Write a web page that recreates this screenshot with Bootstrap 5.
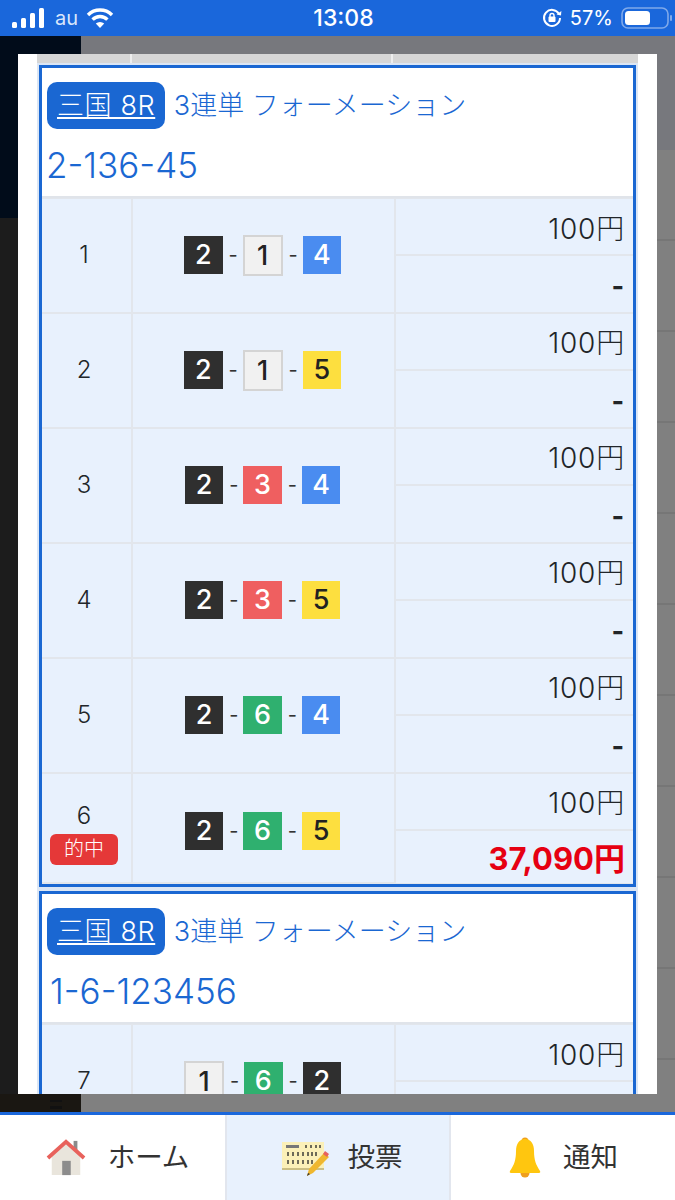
<!DOCTYPE html>
<html lang="ja">
<head>
    <meta charset="UTF-8">
    <meta name="viewport" content="width=device-width, initial-scale=1.0">
    <title>投票</title>
    <link href="https://cdn.jsdelivr.net/npm/bootstrap@5.3.0/dist/css/bootstrap.min.css" rel="stylesheet">
    <style>
        html, body { height: 1200px; overflow: hidden; }
        body {
            font-family: "Inter", "Noto Sans CJK JP", "Noto Sans", sans-serif;
            color: #222;
            background: #fff;
        }
        .phone { height: 1200px; }

        /* ステータスバー */
        .status-bar {
            height: 36px;
            background: #1a67db;
            color: #fff;
            font-family: "Inter", "Liberation Sans", sans-serif;
            font-size: 20px;
            line-height: 36px;
            padding: 0 12px;
        }
        .status-left, .status-right { width: 200px; }
        .status-right { margin-right: -12px; }
        .status-time { font-size: 23px; font-weight: 500; }
        .carrier { color: #d9e6fb; margin: 0 8px 0 11px; font-size: 20px; }

        /* 背景 */
        .backdrop { height: 1076px; position: relative; }
        .back-left { width: 81px; background: #1c1c1c; }
        .back-left-top { height: 182px; background: #010c1a; }
        .back-left-foot { height: 18px; margin-top: auto; background: #1a1712; padding-left: 50px; }
        .foot-glyph { width: 12px; height: 9px; margin-top: 6px; border-top: 2px solid #111; border-bottom: 3px solid #111; }
        .back-right { background: #808080; }
        .back-right-top { height: 114px; background: #77787d; }
        .back-line { height: 91px; border-bottom: 2px solid #767676; }

        /* モーダル */
        .sheet {
            position: absolute;
            top: 18px; left: 18px; right: 18px; bottom: 18px;
            background: #fff;
            overflow: hidden;
            padding: 0 19px;
        }
        .prev-strip { height: 9px; background: #d6d6d6; margin-bottom: 2px; padding-left: 93px; }
        .prev-strip span { display: block; width: 263px; height: 9px; border-left: 2px solid #eee; border-right: 2px solid #eee; }
        .bet-box {
            border: 3px solid #1a67d2;
            outline: 2px solid #dbe6f5;
            margin: 0 2px 4px 2px;
            background: #fff;
        }
        .bet-head { height: 130px; padding: 14px 0 0 5px; color: #1a67d2; border-bottom: 2px solid #e0e4ea; }
        .bet-title { font-size: 27px; font-weight: 300; height: 47px; line-height: 47px; white-space: nowrap; }
        .place-pill {
            display: inline-block;
            height: 47px;
            padding: 0 10px;
            margin-right: 1px;
            background: #1a67d2;
            color: #fff;
            border-radius: 10px;
            letter-spacing: .6px;
        }
        .bet-code { font-size: 35px; font-weight: 300; line-height: 40px; margin: 16px 0 0 -1px; }

        .bet-table { table-layout: fixed; margin: 0; --bs-table-bg: #e8f1fd; --bs-table-border-color: #e2e6ec; }
        .bet-table td { padding: 0; vertical-align: middle; border-width: 0 2px 2px 0; }
        .bet-table tr td:last-child { border-right-width: 0; }
        .bet-table tr:last-child td { border-bottom-width: 0; }
        .col-no { width: 90px; }
        .col-combo { width: 263px; }
        .cell-no { text-align: center; font-size: 24px; line-height: 24px; font-weight: 300; padding-right: 5px !important; }
        .hit-cell { padding-top: 13px !important; }
        .combo-hit { padding-top: 7px !important; }
        .cell-yen {
            height: 57.5px;
            text-align: right;
            padding: 4px 8px 0 0 !important;
            font-size: 28px;
            font-weight: 300;
            letter-spacing: .8px;
        }
        .bet-table tbody tr:first-child .cell-yen { height: 56.5px; }
        .cell-bar { font-weight: 700; font-size: 27px; line-height: 1; }
        .bet-table tr.short-row .cell-yen { height: 53px; padding-top: 6px !important; }
        .win-amount { color: #e60012; font-weight: 700; font-size: 31px; line-height: 1; letter-spacing: 0; }
        .hit-tag {
            display: block;
            width: 68px;
            height: 31px;
            margin: 6px auto 0;
            background: #e53838;
            color: #fff;
            border-radius: 6px;
            font-size: 20px;
            line-height: 31px;
        }
        .combo { gap: 6px; padding-right: 2px; }
        .combo i { font-style: normal; font-size: 20px; color: #333; width: 8px; text-align: center; }
        .boat {
            width: 38.5px;
            height: 38px;
            font-size: 27px;
            font-weight: 550;
            line-height: 38px;
            text-align: center;
        }
        .boat-1 { width: 40px; height: 41px; line-height: 38px; background: #f1f1f1; color: #222; border: 2px solid #d4d4d4; }
        .boat-2 { background: #2f2f2f; color: #fff; }
        .boat-3 { background: #ef5f60; color: #fff; }
        .boat-4 { background: #4a8cf0; color: #fff; }
        .boat-5 { background: #fddf3f; color: #222; }
        .boat-6 { background: #2fb06f; color: #fff; }

        /* 下ナビ */
        .foot-nav { height: 88px; border-top: 3px solid #1a67db; background: #fff; }
        .foot-item { font-size: 27.5px; color: #333; }
        .foot-home { flex: 0 0 225px; gap: 22px; padding-left: 10px; }
        .foot-vote { flex: 0 0 224px; gap: 17px; padding-left: 7px; background: #e8f1fd; border-left: 2px solid #e2e6ee; }
        .foot-bell { flex: 1 1 auto; gap: 21px; border-left: 2px solid #e2e6ee; }
    </style>
</head>
<body>
<div class="phone d-flex flex-column">

    <div class="status-bar d-flex justify-content-between align-items-center">
        <div class="status-left d-flex align-items-center">
            <svg width="32" height="20" viewBox="0 0 32 20" fill="#fff"><rect x="0" y="14" width="5" height="6" rx="1.5"/><rect x="9" y="10" width="5" height="10" rx="1.5"/><rect x="18" y="5" width="5" height="15" rx="1.5"/><rect x="27" y="0" width="5" height="20" rx="1.5"/></svg>
            <span class="carrier">au</span>
            <svg width="28" height="22" viewBox="0 0 28 22" fill="none" stroke="#fff" stroke-width="3.4"><path d="M2 8a17 17 0 0 1 24 0"/><path d="M6.6 12.6a10.5 10.5 0 0 1 14.8 0"/><path d="M14 21l-4.2-4.4a6 6 0 0 1 8.4 0z" fill="#fff" stroke="none"/></svg>
        </div>
        <div class="status-time">13:08</div>
        <div class="status-right d-flex align-items-center justify-content-end gap-2">
            <svg width="20" height="22" viewBox="0 0 20 22" fill="none" stroke="#fff" stroke-width="2"><path d="M17 7a8 8 0 1 0 1 4"/><path d="M14.5 7.5l4.5 1 .4-4.5z" fill="#fff" stroke="none"/><rect x="6.5" y="9.5" width="7" height="5.5" rx="1" fill="#fff" stroke="none"/><path d="M8 10V8.500a2 2 0 0 1 4 0V10" stroke-width="1.4"/></svg>
            <span>57%</span>
            <svg width="54" height="24" viewBox="0 0 54 24"><rect x="1" y="2" width="46" height="20" rx="6" fill="none" stroke="#7fa9ea" stroke-width="1.6"/><rect x="4" y="5" width="25" height="14" rx="3.500" fill="#fff"/><rect x="49" y="9" width="2" height="6" rx="1" fill="#7fa9ea"/></svg>
        </div>
    </div>

    <div class="backdrop d-flex">
        <div class="back-left d-flex flex-column">
            <div class="back-left-top"></div>
            <div class="back-left-foot"><div class="foot-glyph"></div></div>
        </div>
        <div class="back-right flex-grow-1">
            <div class="back-right-top"></div>
            <div class="back-line"></div>
            <div class="back-line"></div>
            <div class="back-line"></div>
            <div class="back-line"></div>
            <div class="back-line"></div>
            <div class="back-line"></div>
            <div class="back-line"></div>
            <div class="back-line"></div>
            <div class="back-line"></div>
            <div class="back-line"></div>
        </div>

        <div class="sheet">
            <div class="prev-strip"><span></span></div>

            <div class="bet-box">
                <div class="bet-head">
                    <div class="bet-title"><a class="place-pill" href="#">三国 8R</a> 3連単 フォーメーション</div>
                    <div class="bet-code">2-136-45</div>
                </div>
                <table class="table table-bordered bet-table">
                    <colgroup><col class="col-no"><col class="col-combo"><col></colgroup>
                    <tbody id="rows1"></tbody>
                </table>
            </div>

            <div class="bet-box">
                <div class="bet-head">
                    <div class="bet-title"><a class="place-pill" href="#">三国 8R</a> 3連単 フォーメーション</div>
                    <div class="bet-code ps-1">1-6-123456</div>
                </div>
                <table class="table table-bordered bet-table">
                    <colgroup><col class="col-no"><col class="col-combo"><col></colgroup>
                    <tbody id="rows2"></tbody>
                </table>
            </div>
        </div>
    </div>

    <nav class="foot-nav d-flex">
        <div class="foot-item foot-home d-flex align-items-center justify-content-center">
            <svg width="40" height="38" viewBox="0 0 42 40"><rect x="29" y="2" width="4" height="12" fill="#8a8a8a"/><path d="M6 18L21 5l15 13v20H6z" fill="#e9e5dc"/><rect x="17" y="23" width="9" height="15" fill="#8c8c8c"/><path d="M2 20L21 3l19 17" fill="none" stroke="#e8625c" stroke-width="4"/></svg>
            <span>ホーム</span>
        </div>
        <div class="foot-item foot-vote d-flex align-items-center justify-content-center">
            <svg width="50" height="40" viewBox="0 0 50 40"><rect x="1" y="4" width="42" height="28" fill="#fbf0b8"/><rect x="1" y="30" width="42" height="2" fill="#cbbf85"/><rect x="5" y="7" width="13" height="3" fill="#777"/><g fill="#6d6a58"><rect x="24" y="7" width="2" height="3"/><rect x="29" y="7" width="2" height="3"/><rect x="34" y="7" width="2" height="3"/><rect x="38" y="7" width="2" height="3"/><rect x="6" y="14" width="2" height="4"/><rect x="11" y="14" width="2" height="4"/><rect x="16" y="14" width="2" height="4"/><rect x="21" y="14" width="2" height="4"/><rect x="26" y="14" width="2" height="4"/><rect x="30" y="14" width="2" height="4"/><rect x="34" y="14" width="2" height="4"/><rect x="6" y="22" width="2" height="4"/><rect x="11" y="22" width="2" height="4"/><rect x="16" y="22" width="2" height="4"/><rect x="21" y="22" width="2" height="4"/><rect x="26" y="22" width="2" height="4"/><rect x="30" y="22" width="2" height="4"/></g><path d="M26 38l2-7 15-16 5 4-16 16z" fill="#efb72f"/><path d="M42 16l2-3 4 3-2 3z" fill="#e8625c"/><path d="M26 38l1-3 2 1z" fill="#333"/></svg>
            <span>投票</span>
        </div>
        <div class="foot-item foot-bell d-flex align-items-center justify-content-center">
            <svg width="34" height="42" viewBox="0 0 34 42"><circle cx="17" cy="4" r="3.500" fill="#ef9f1d"/><circle cx="17" cy="36" r="4.500" fill="#ef9f1d"/><path d="M17 2c6 0 9 5 9 12 0 9 2 14 6 20 .6 1 0 2-1 2H3c-1 0-1.600-1-1-2 4-6 6-11 6-20 0-7 3-12 9-12z" fill="#ffc60f"/></svg>
            <span>通知</span>
        </div>
    </nav>
</div>

<script src="https://cdn.jsdelivr.net/npm/bootstrap@5.3.0/dist/js/bootstrap.bundle.min.js"></script>
<script>
    const boat = n => `<span class="boat boat-${n}">${n}</span>`;

    function rowHtml(r) {
        const parts = r.combo.map(boat).join('<i>-</i>');
        const tag = r.hit ? '<span class="hit-tag">的中</span>' : '';
        const hitCls = r.hit ? ' hit-cell' : '';
        const comboCls = r.hit ? ' class="combo-hit"' : '';
        const short = r.hit ? ' class="short-row"' : '';
        let result = '<span class="cell-bar">-</span>';
        if (r.win) result = `<span class="win-amount">${r.win}</span>`;
        if (r.clipped) result = '';
        return `<tr>
            <td rowspan="2" class="cell-no${hitCls}">${r.no}${tag}</td>
            <td rowspan="2"${comboCls}><div class="combo d-flex justify-content-center align-items-center">${parts}</div></td>
            <td class="cell-yen">100円</td></tr>
            <tr${short}><td class="cell-yen">${result}</td></tr>`;
    }

    const first = [
        {no: 1, combo: [2,1,4]},
        {no: 2, combo: [2,1,5]},
        {no: 3, combo: [2,3,4]},
        {no: 4, combo: [2,3,5]},
        {no: 5, combo: [2,6,4]},
        {no: 6, combo: [2,6,5], hit: true, win: '37,090円'}
    ];
    document.getElementById('rows1').innerHTML = first.map(rowHtml).join('');
    // 下の行はモーダルの外で切れる
    document.getElementById('rows2').innerHTML = rowHtml({no: 7, combo: [1,6,2], clipped: true});
</script>
</body>
</html>
